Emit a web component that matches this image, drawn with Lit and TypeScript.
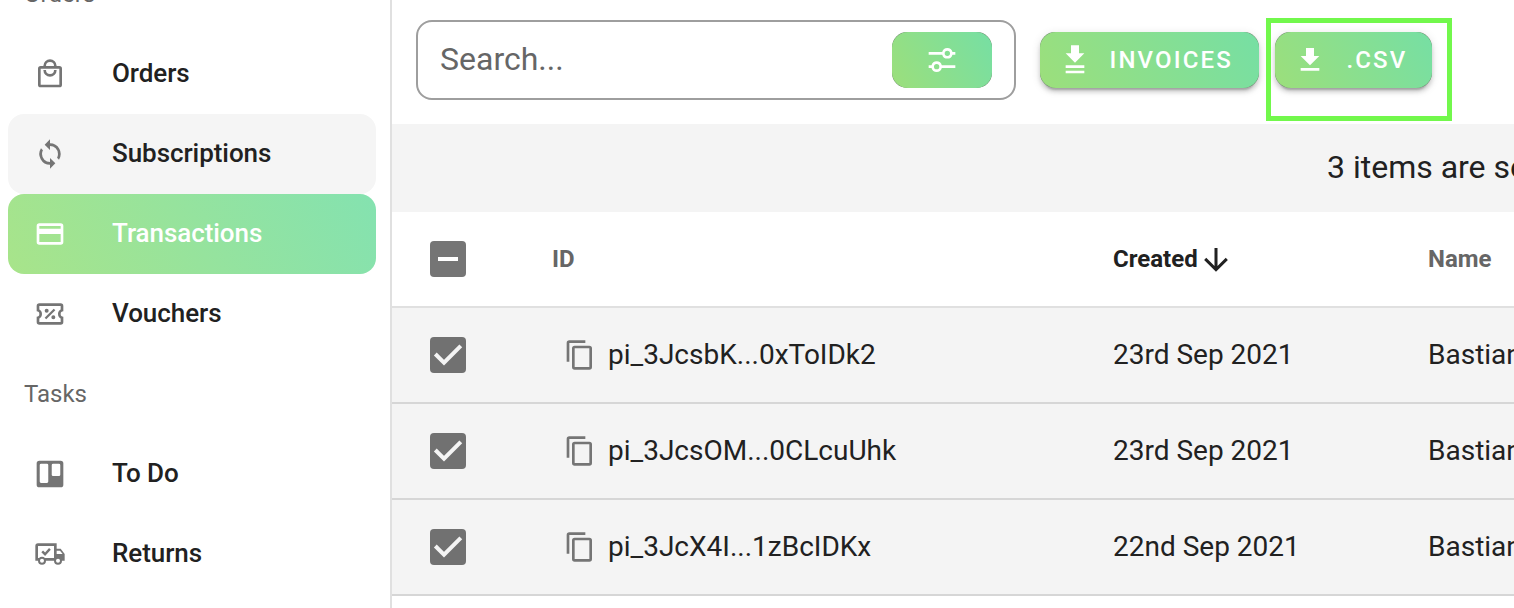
import { LitElement, html, svg, css } from 'lit'
import { customElement, property } from 'lit/decorators.js'
import { classMap } from 'lit/directives/class-map.js'

const ICONS: Record<string, string> = {
    orders: 'M12 1a5 5 0 0 0-5 5H5a2 2 0 0 0-2 2v12a2 2 0 0 0 2 2h14a2 2 0 0 0 2-2V8a2 2 0 0 0-2-2h-2a5 5 0 0 0-5-5m0 2a3 3 0 0 1 3 3H9a3 3 0 0 1 3-3M5 8h14v12H5V8m2 1a5 5 0 0 0 10 0h-2a3 3 0 0 1-6 0H7z',
    sync: 'M12 18a6 6 0 0 1-6-6c0-1 .25-1.97.7-2.8L5.24 7.74A8 8 0 0 0 12 20v3l4-4-4-4v3m0-14V1L8 5l4 4V6a6 6 0 0 1 6 6c0 1-.25 1.97-.7 2.8l1.46 1.46A8 8 0 0 0 12 4z',
    card: 'M20 8H4V6h16m0 12H4v-6h16m0-8H4a2 2 0 0 0-2 2v12a2 2 0 0 0 2 2h16a2 2 0 0 0 2-2V6a2 2 0 0 0-2-2z',
    voucher:
        'M14.8 8L16 9.2 9.2 16 8 14.8 14.8 8M4 4h16a2 2 0 0 1 2 2v4a2 2 0 0 0 0 4v4a2 2 0 0 1-2 2H4a2 2 0 0 1-2-2v-4a2 2 0 0 0 0-4V6a2 2 0 0 1 2-2m0 2v2.54a4 4 0 0 1 0 6.92V18h16v-2.54a4 4 0 0 1 0-6.92V6H4m5.5 2a1.5 1.5 0 1 1 0 3 1.5 1.5 0 0 1 0-3m5 5a1.5 1.5 0 1 1 0 3 1.5 1.5 0 0 1 0-3z',
    board: 'M4 2h16a2 2 0 0 1 2 2v16a2 2 0 0 1-2 2H4a2 2 0 0 1-2-2V4a2 2 0 0 1 2-2m1.3 2.3a1 1 0 0 0-1 1v12.4a1 1 0 0 0 1 1h4.4a1 1 0 0 0 1-1V5.3a1 1 0 0 0-1-1H5.3m9 0a1 1 0 0 0-1 1v7.2a1 1 0 0 0 1 1h4.4a1 1 0 0 0 1-1V5.3a1 1 0 0 0-1-1h-4.4z',
    truck: 'M18 18.5a1.5 1.5 0 1 0 0-3 1.5 1.5 0 0 0 0 3m1.5-9H17V12h4.46L19.5 9.5M6 18.5a1.5 1.5 0 1 0 0-3 1.5 1.5 0 0 0 0 3M20 8l3 4v5h-2a3 3 0 0 1-6 0H9a3 3 0 0 1-6 0H1V6a2 2 0 0 1 2-2h14v4h3M3 6v9h.76a3 3 0 0 1 4.48 0H15V6H3m2.5 4.7l1.3-1.3 1.5 1.5 3-3.4 1.3 1.3-4.3 4.7-2.8-2.8z',
    tune: 'M8 13a4 4 0 0 0-3.86 3H2v2h2.14a4 4 0 0 0 7.72 0H22v-2H11.86A4 4 0 0 0 8 13m0 6a2 2 0 1 1 0-4 2 2 0 0 1 0 4M19.86 6a4 4 0 0 0-7.72 0H2v2h10.14a4 4 0 0 0 7.72 0H22V6h-2.14M16 9a2 2 0 1 1 0-4 2 2 0 0 1 0 4z',
    downloads: 'M9 1v6H5l7 7 7-7h-4V1H9M5 16v2h14v-2H5m0 4v2h14v-2H5z',
    download: 'M5 20h14v-2H5m14-9h-4V3H9v6H5l7 7 7-7z',
    copy: 'M19 21H8V7h11m0-2H8a2 2 0 0 0-2 2v14a2 2 0 0 0 2 2h11a2 2 0 0 0 2-2V7a2 2 0 0 0-2-2m-3-4H4a2 2 0 0 0-2 2v14h2V3h12V1z',
    down: 'M11 4h2v12l5.5-5.5 1.42 1.42L12 19.84l-7.92-7.92L5.5 10.5 11 16V4z'
}

const NAV = [
    { title: 'Orders', items: [
        { label: 'Orders', icon: 'orders' },
        { label: 'Subscriptions', icon: 'sync', hover: true },
        { label: 'Transactions', icon: 'card', active: true },
        { label: 'Vouchers', icon: 'voucher' }
    ] },
    { title: 'Tasks', items: [
        { label: 'To Do', icon: 'board' },
        { label: 'Returns', icon: 'truck' }
    ] }
] as { title: string; items: { label: string; icon: string; hover?: boolean; active?: boolean }[] }[]

const ROWS = [
    { id: 'pi_3JcsbK...0xToIDk2', created: '23rd Sep 2021', name: 'Bastian' },
    { id: 'pi_3JcsOM...0CLcuUhk', created: '23rd Sep 2021', name: 'Bastian' },
    { id: 'pi_3JcX4I...1zBcIDKx', created: '22nd Sep 2021', name: 'Bastian' }
]

@customElement('x-icon')
export class XIcon extends LitElement {
    static styles = css`
        :host {
            display: block;
            flex: none;
            width: 32px;
            height: 32px;
        }

        svg {
            display: block;
            width: 100%;
            height: 100%;
            fill: currentColor;
        }
    `

    @property() name = ''

    render() {
        return html`<svg viewBox="0 0 24 24">${svg`<path fill-rule="evenodd" d=${ICONS[this.name]} />`}</svg>`
    }
}

@customElement('x-check')
export class XCheck extends LitElement {
    static styles = css`
        :host {
            display: block;
            width: 36px;
            height: 36px;
            border-radius: 4px;
            background: #717171;
            color: #f4f4f4;
        }

        :host([mixed]) {
            background: #757575;
            color: #fff;
        }

        svg {
            display: block;
            fill: none;
            stroke: currentColor;
        }
    `

    @property({ type: Boolean, reflect: true }) mixed = false

    render() {
        return html`
            <svg width="36" height="36" viewBox="0 0 36 36">
                ${this.mixed
                    ? svg`<path stroke-width="4" d="M8 18h20" />`
                    : svg`<path stroke-width="4" d="M5.3 17l8.7 8.6L30.8 8.8" />`}
            </svg>
        `
    }
}

@customElement('x-button')
export class XButton extends LitElement {
    static styles = css`
        :host {
            display: block;
            height: 56px;
            border-radius: 15px;
            background: #6b8a6b;
            color: #fff;
        }

        :host([raised]) {
            box-shadow: 0 6px 2px -4px rgba(0, 0, 0, 0.2), 0 4px 4px rgba(0, 0, 0, 0.14),
                0 2px 10px rgba(0, 0, 0, 0.12);
        }

        .face {
            display: flex;
            align-items: center;
            justify-content: center;
            box-sizing: border-box;
            width: 100%;
            height: 100%;
            padding: 0 19px;
            border-radius: 16px;
            background: linear-gradient(60deg, #9cdf7b, #76dfa4);
            font-size: 24px;
            font-weight: 500;
            letter-spacing: 2.14px;
            white-space: nowrap;
        }

        :host([raised]) .face {
            justify-content: flex-start;
            gap: var(--button-gap, 18.5px);
        }
    `

    @property() icon = ''

    render() {
        return html`<div class="face"><x-icon name=${this.icon}></x-icon><slot></slot></div>`
    }
}

@customElement('app-root')
export class AppRoot extends LitElement {
    static styles = css`
        :host {
            display: flex;
            width: 1514px;
            height: 608px;
            overflow: hidden;
            background: #fff;
            color: #212121;
            font-family: Roboto, sans-serif;
        }

        aside {
            flex: none;
            box-sizing: border-box;
            width: 392px;
            height: 608px;
            overflow: hidden;
            border-right: 2px solid #e0e0e0;
        }

        nav {
            margin-top: -46px;
            padding: 0 14px 0 8px;
        }

        .title {
            height: 80px;
            padding-left: 16px;
            line-height: 80px;
            font-size: 24px;
            color: #666;
        }

        .item {
            display: flex;
            align-items: center;
            gap: 46px;
            height: 80px;
            padding-left: 26px;
            border-radius: 16px;
            font-size: 26px;
            font-weight: 500;
            letter-spacing: -0.06px;
        }

        .item x-icon {
            color: #757575;
        }

        .item span {
            line-height: 78px;
            height: 80px;
        }

        .item.hover {
            background: #f5f5f5;
        }

        .item.active {
            background: linear-gradient(60deg, #a8e48a, #84e2b0);
            color: #fff;
        }

        .item.active x-icon {
            color: #fff;
        }

        main {
            flex: 1;
            min-width: 0;
            overflow: hidden;
        }

        .toolbar {
            display: flex;
            align-items: center;
            height: 120px;
            padding: 0 0 4px 24px;
            box-sizing: border-box;
            margin-bottom: 4px;
        }

        .search {
            display: flex;
            align-items: center;
            justify-content: space-between;
            box-sizing: border-box;
            width: 600px;
            height: 80px;
            margin: 4px 24px 0 0;
            padding: 0 22px;
            border: 2px solid #9e9e9e;
            border-radius: 16px;
            font-size: 32px;
            color: #666;
        }

        .search span {
            padding-bottom: 2px;
        }

        .search x-button {
            width: 100px;
        }

        .invoices {
            width: 219px;
            margin: 4px 16px 0 0;
        }

        .export {
            position: relative;
            margin-top: 4px;
        }

        .export x-button {
            --button-gap: 20.5px;
            width: 157px;
        }

        /* callout frame drawn over the export button */
        .frame {
            position: absolute;
            top: -14px;
            left: -9px;
            box-sizing: border-box;
            width: 186px;
            height: 103px;
            border: 5px solid #72f84c;
        }

        .banner {
            height: 88px;
            padding-left: 935px;
            background: #f4f4f4;
            line-height: 86px;
            font-size: 32px;
            white-space: nowrap;
        }

        .row {
            display: grid;
            grid-template-columns: 122px 561px 315px 240px;
            align-items: center;
            box-sizing: border-box;
            width: 1276px;
            height: 96px;
            padding-left: 38px;
            border-bottom: 2px solid #d6d6d6;
            background: #f4f4f4;
            font-size: 28px;
            white-space: nowrap;
        }

        .text {
            padding-bottom: 2px;
        }

        .row.head {
            border-color: #e0e0e0;
            background: #fff;
            font-size: 24px;
            font-weight: 700;
            color: #666;
        }

        .id {
            display: flex;
            align-items: center;
            gap: 12px;
            padding-left: 12px;
        }

        .id x-icon {
            color: #757575;
        }

        .sorted {
            display: flex;
            align-items: center;
            color: #212121;
        }

        .sorted x-icon {
            width: 36px;
            height: 36px;
            padding-top: 2px;
        }
    `

    renderItem(item: (typeof NAV)[0]['items'][0]) {
        return html`
            <div class=${classMap({ item: true, hover: !!item.hover, active: !!item.active })}>
                <x-icon name=${item.icon}></x-icon>
                <span>${item.label}</span>
            </div>
        `
    }

    render() {
        return html`
            <aside>
                <nav>
                    ${NAV.map(
                        group => html`
                            <div class="title">${group.title}</div>
                            ${group.items.map(item => this.renderItem(item))}
                        `
                    )}
                </nav>
            </aside>
            <main>
                <div class="toolbar">
                    <div class="search">
                        <span>Search...</span>
                        <x-button icon="tune"></x-button>
                    </div>
                    <x-button class="invoices" icon="downloads" raised>INVOICES</x-button>
                    <div class="export">
                        <x-button icon="download" raised>.CSV</x-button>
                        <div class="frame"></div>
                    </div>
                </div>
                <div class="banner">3 items are selected</div>
                <div class="row head">
                    <x-check mixed></x-check>
                    <div>ID</div>
                    <div class="sorted">Created<x-icon name="down"></x-icon></div>
                    <div>Name</div>
                </div>
                ${ROWS.map(
                    row => html`
                        <div class="row">
                            <x-check></x-check>
                            <div class="id">
                                <x-icon name="copy"></x-icon>
                                <span class="text">${row.id}</span>
                            </div>
                            <div class="text">${row.created}</div>
                            <div class="text">${row.name}</div>
                        </div>
                    `
                )}
            </main>
        `
    }
}
